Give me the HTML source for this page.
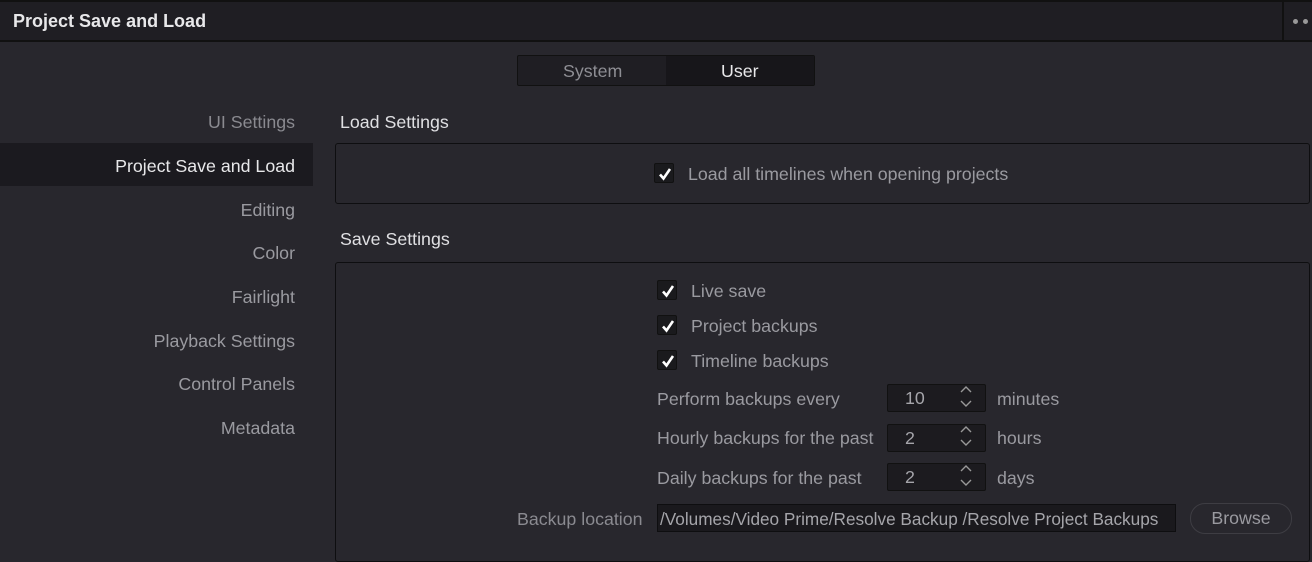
<!DOCTYPE html>
<html><head><style>
*{margin:0;padding:0;box-sizing:border-box}
body{width:1312px;height:552px;background:#28272d;font-family:"Liberation Sans",sans-serif;color:#9a9aa0;font-size:17.8px;position:relative;overflow:hidden}
.a{position:absolute;white-space:nowrap}
.hdr{left:0;top:0;width:1312px;height:42px;background:#1f1e23;border-top:2px solid #111;border-bottom:2px solid #111}
.nav{right:1017px;text-align:right;line-height:20px}
.box{border:1px solid #0e0e10;border-radius:3px;background:#28272d}
.cb{width:20px;height:20px;background:#1a1a1d;border:1px solid #111;border-radius:2px}
.cb svg{position:absolute;left:1px;top:1px}
.sp{width:99px;height:28px;background:#1c1b1f;border:1px solid #111;border-radius:2px;color:#a5a5aa;padding-left:17px;line-height:27px}
</style></head><body>
<div class="a hdr"></div>
<div class="a" style="left:13px;top:11px;font-size:18px;font-weight:bold;color:#e8e8ea">Project Save and Load</div>
<div class="a" style="left:1282px;top:2px;width:2px;height:38px;background:#111"></div>
<div class="a" style="left:1293px;top:19px;width:5px;height:5px;border-radius:50%;background:#999"></div>
<div class="a" style="left:1303px;top:19px;width:5px;height:5px;border-radius:50%;background:#999"></div>

<div class="a" style="left:517px;top:55px;width:298px;height:31px;background:#1f1e23;border:1px solid #111;border-radius:2px"></div>
<div class="a" style="left:666px;top:56px;width:148px;height:29px;background:#17161a"></div>
<div class="a" style="left:563px;top:61px;color:#8e8e94">System</div>
<div class="a" style="left:721px;top:61px;color:#e8e8ea">User</div>

<div class="a" style="left:0;top:143px;width:313px;height:43px;background:#1b1a1f"></div>
<div class="a nav" style="top:112px;color:#8a8a90">UI Settings</div>
<div class="a nav" style="top:156px;color:#e8e8ea">Project Save and Load</div>
<div class="a nav" style="top:200px">Editing</div>
<div class="a nav" style="top:243px">Color</div>
<div class="a nav" style="top:287px">Fairlight</div>
<div class="a nav" style="top:331px">Playback Settings</div>
<div class="a nav" style="top:374px">Control Panels</div>
<div class="a nav" style="top:418px">Metadata</div>

<div class="a" style="left:340px;top:112px;color:#e0e0e3">Load Settings</div>
<div class="a box" style="left:335px;top:143px;width:975px;height:61px"></div>
<div class="a cb" style="left:654px;top:163px"><svg width="18" height="18"><path d="M4 9.5L7.5 13.5L14 4" stroke="#fff" stroke-width="2.6" fill="none"/></svg></div>
<div class="a" style="left:688px;top:164px">Load all timelines when opening projects</div>

<div class="a" style="left:340px;top:229px;color:#e0e0e3">Save Settings</div>
<div class="a box" style="left:335px;top:262px;width:975px;height:300px"></div>
<div class="a cb" style="left:657px;top:280px"><svg width="18" height="18"><path d="M4 9.5L7.5 13.5L14 4" stroke="#fff" stroke-width="2.6" fill="none"/></svg></div>
<div class="a" style="left:691px;top:281px">Live save</div>
<div class="a cb" style="left:657px;top:315px"><svg width="18" height="18"><path d="M4 9.5L7.5 13.5L14 4" stroke="#fff" stroke-width="2.6" fill="none"/></svg></div>
<div class="a" style="left:691px;top:316px">Project backups</div>
<div class="a cb" style="left:657px;top:350px"><svg width="18" height="18"><path d="M4 9.5L7.5 13.5L14 4" stroke="#fff" stroke-width="2.6" fill="none"/></svg></div>
<div class="a" style="left:691px;top:351px">Timeline backups</div>

<div class="a" style="left:657px;top:389px">Perform backups every</div>
<div class="a sp" style="left:887px;top:384px">10</div>
<div class="a" style="left:997px;top:389px">minutes</div>
<div class="a" style="left:657px;top:428px">Hourly backups for the past</div>
<div class="a sp" style="left:887px;top:424px">2</div>
<div class="a" style="left:997px;top:428px">hours</div>
<div class="a" style="left:657px;top:468px">Daily backups for the past</div>
<div class="a sp" style="left:887px;top:463px">2</div>
<div class="a" style="left:997px;top:468px">days</div>
<svg class="a" style="left:958px;top:384px" width="16" height="120"><g stroke="#999" stroke-width="1.4" fill="none"><path d="M3 8L8 3L13 8M3 17L8 22L13 17"/><path d="M3 48L8 43L13 48M3 56L8 61L13 56"/><path d="M3 87L8 82L13 87M3 96L8 101L13 96"/></g></svg>

<div class="a" style="left:517px;top:509px;color:#8a8a90">Backup location</div>
<div class="a" style="left:657px;top:504px;width:519px;height:28px;background:#1a191d;border:1px solid #0e0e10;color:#a5a5aa;padding-left:2px;line-height:28px;overflow:hidden;font-size:17.2px">/Volumes/Video Prime/Resolve Backup /Resolve Project Backups</div>
<div class="a" style="left:1190px;top:503px;width:102px;height:31px;border:1px solid #3e3d43;border-radius:15px;text-align:center;line-height:29px;color:#9a9aa0">Browse</div>
</body></html>
